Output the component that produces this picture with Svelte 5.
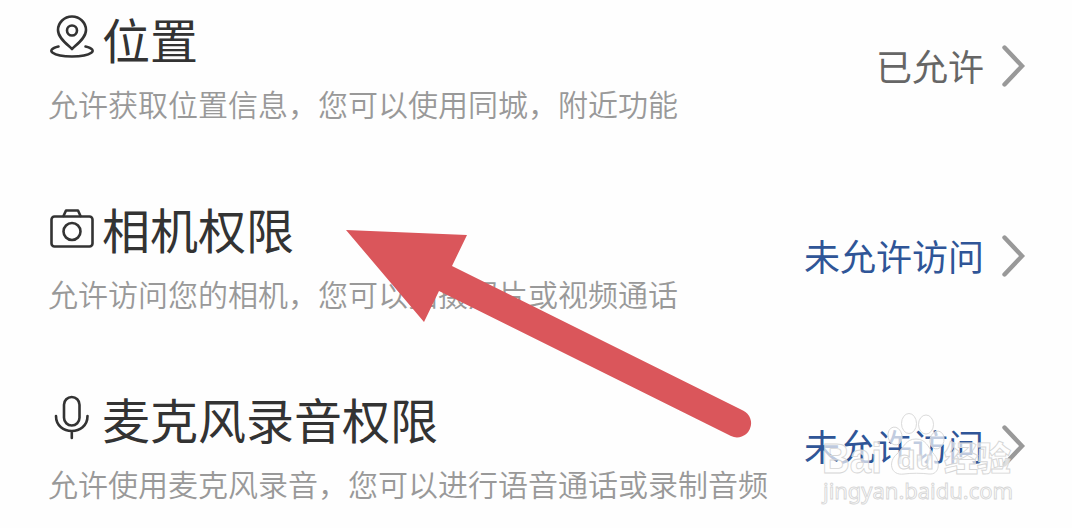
<script>
  const permissions = [
    {
      icon: 'location',
      title: '位置',
      desc: '允许获取位置信息，您可以使用同城，附近功能',
      status: '已允许',
      allowed: true
    },
    {
      icon: 'camera',
      title: '相机权限',
      desc: '允许访问您的相机，您可以拍摄照片或视频通话',
      status: '未允许访问',
      allowed: false
    },
    {
      icon: 'mic',
      title: '麦克风录音权限',
      desc: '允许使用麦克风录音，您可以进行语音通话或录制音频',
      status: '未允许访问',
      allowed: false
    }
  ]
</script>

<div class="page">
  {#each permissions as item}
    <div class="row">
      <div class="info">
        <div class="heading">
          <svg class="icon" width="48" height="60" viewBox="0 0 48 60">
            {#if item.icon === 'location'}
              <path d="M24 41 C19 36 10 30 10 22 A14 13.500 0 0 1 38 22 C38 30 29 36 24 41 Z" />
              <circle cx="24" cy="22.500" r="5" />
              <path d="M10.500 38.500 C-4 42 5 48.500 24 48.500 C43 48.500 52 42 37.500 38.500" />
            {:else if item.icon === 'camera'}
              <rect x="3.500" y="18.500" width="41" height="30" rx="3" />
              <path d="M15.500 18 L18 12.500 H30 L32.500 18" />
              <circle cx="24" cy="33.500" r="8.500" />
            {:else}
              <rect x="16" y="9" width="15.500" height="28.500" rx="7.750" />
              <path d="M8 28 C8 48 39.500 48 39.500 28 M23.800 43.500 V50" />
            {/if}
          </svg>
          <span class="title">{item.title}</span>
        </div>
        <div class="desc">{item.desc}</div>
      </div>
      <div class="status" class:denied={!item.allowed}>
        <span>{item.status}</span>
        <svg class="chevron" width="26" height="44" viewBox="0 0 26 44">
          <path d="M4.500 4.500 L22 23 L4.500 41.500" />
        </svg>
      </div>
    </div>
  {/each}

  <svg class="arrow" width="1072" height="528" viewBox="0 0 1072 528">
    <path d="M346 230 L467 235 L452 266 L743 410.500 A14 14 0 0 1 731 436 L439 291 L424 322 Z" />
  </svg>

  <svg class="watermark" width="212" height="106" viewBox="0 0 212 106">
    <ellipse cx="89" cy="22.500" rx="7.500" ry="10" />
    <ellipse cx="106" cy="23.500" rx="7.500" ry="9.500" />
    <ellipse cx="75" cy="35" rx="7" ry="9" transform="rotate(-12 75 35)" />
    <ellipse cx="117" cy="39" rx="7" ry="9" transform="rotate(12 117 39)" />
    <text class="brand" x="2" y="72" textLength="60" lengthAdjust="spacingAndGlyphs">Bai</text>
    <path d="M96 38 C106 38 108 46 113 52 C121 60 120 74 109 73 C102 72 91 72 84 73 C70 75 68 60 77 53 C84 46 86 38 96 38 Z" />
    <text class="du" x="77" y="68" textLength="37" lengthAdjust="spacingAndGlyphs">du</text>
    <text class="name" x="124" y="70" textLength="67">经验</text>
    <text class="site" x="3" y="98" textLength="190">jingyan.baidu.com</text>
  </svg>
</div>

<style>
:global(body) {
  margin: 0;
  background: #fefefe;
}
.page {
  position: relative;
  width: 1072px;
  height: 528px;
  overflow: hidden;
  background: #fefefe;
  font-family: "Noto Sans CJK SC", sans-serif;
}
.row {
  box-sizing: border-box;
  display: flex;
  justify-content: space-between;
  height: 190px;
  padding: 8px 46px 0 48px;
  white-space: nowrap;
}
.heading {
  display: flex;
  gap: 6px;
  height: 60px;
}
.icon {
  fill: none;
  stroke: #333;
  stroke-width: 2.6;
  stroke-linecap: round;
  stroke-linejoin: round;
}
.title {
  font-size: 48px;
  line-height: 60px;
  color: #333;
}
.desc {
  margin-top: 17px;
  font-size: 30px;
  line-height: 36px;
  font-weight: 350;
  color: #999;
}
.status {
  display: flex;
  align-items: center;
  gap: 16px;
  height: 44px;
  margin-top: 35px;
  font-size: 36px;
  line-height: 44px;
  color: #666;
}
.denied {
  color: #2f5597;
}
.chevron {
  fill: none;
  stroke: #999;
  stroke-width: 4.4;
  stroke-linecap: round;
}
.arrow {
  position: absolute;
  left: 0;
  top: 0;
  fill: #da565b;
}
.watermark {
  position: absolute;
  left: 820px;
  top: 401px;
  fill: rgba(255, 255, 255, 0.7);
  stroke: #d6d6d6;
  stroke-width: 0.9;
}
.brand,
.du {
  font-family: "Liberation Sans", sans-serif;
  font-weight: bold;
  font-size: 42px;
}
.du {
  font-size: 25px;
}
.name {
  font-weight: 900;
  font-size: 34px;
}
.site {
  font-family: "Noto Sans", sans-serif;
  font-size: 22px;
}
</style>
